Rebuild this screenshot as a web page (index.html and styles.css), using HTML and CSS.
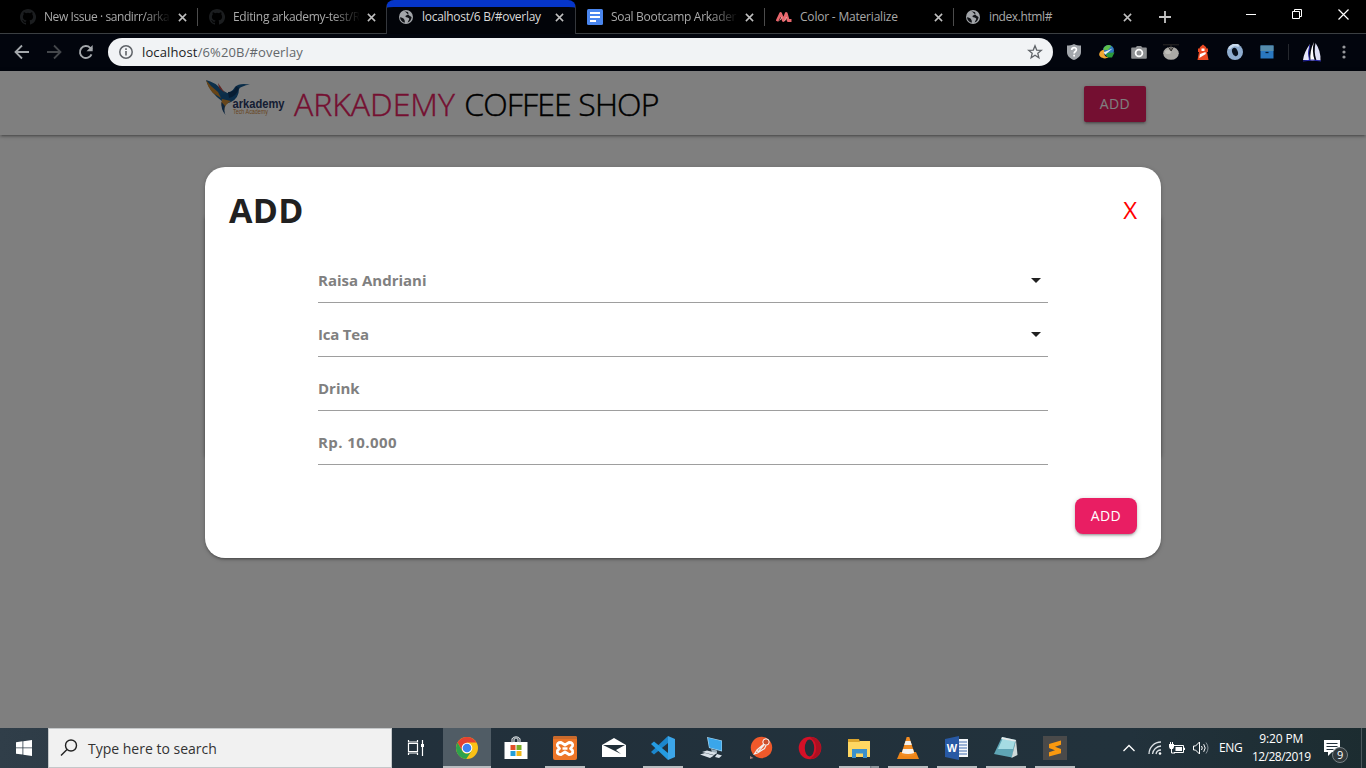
FILE: index.html
```html
<!DOCTYPE html>
<html lang="en">
<head>
<meta charset="utf-8">
<title>localhost/6 B/#overlay</title>
<link rel="stylesheet" href="styles.css">
</head>
<body>
<svg class="defs" width="0" height="0" aria-hidden="true">
  <symbol id="github" viewBox="0 0 16 16"><path d="M8 0C3.58 0 0 3.58 0 8c0 3.54 2.29 6.53 5.47 7.59.4.07.55-.17.55-.38v-1.49c-2.23.49-2.7-.94-2.7-.94-.36-.92-.89-1.17-.89-1.17-.73-.5.05-.49.05-.49.81.06 1.23.83 1.23.83.72 1.22 1.87.87 2.33.66.07-.52.28-.87.51-1.07-1.78-.2-3.64-.89-3.64-3.95 0-.87.31-1.59.82-2.15-.08-.2-.36-1.02.08-2.12 0 0 .67-.21 2.2.82a7.6 7.6 0 0 1 4 0c1.53-1.04 2.2-.82 2.2-.82.44 1.1.16 1.92.08 2.12.51.56.82 1.27.82 2.15 0 3.07-1.87 3.75-3.65 3.95.29.25.54.73.54 1.48v2.2c0 .21.15.46.55.38A8 8 0 0 0 8 0z" fill="#1b1d1f"/></symbol>
  <symbol id="globe" viewBox="0 0 16 16"><circle cx="8" cy="8" r="7" fill="#a2a5a9"/><path d="M6 1.600C8 3.500 10.500 2.200 10.400 4.400 10.300 6.200 8 5.500 7.500 7.200 7.200 8.500 9.300 8 10.600 9 12 10.200 10.800 11 10.200 12.200L9.600 13.500C12 12.800 13.400 10.500 13.600 8 12.500 8 12.500 7 11.200 6.600M2 8.200C4 8.200 5.500 9.200 6.200 10.400 6.700 11.300 7 12 6.700 13.700 4 13 2.200 10.900 2 8.200Z" fill="#101216"/></symbol>
  <symbol id="close" viewBox="0 0 10 10"><path d="M1 1l8 8M9 1L1 9" stroke="currentColor" stroke-width="1.700" fill="none"/></symbol>
</svg>

<div class="tabs">
  <div class="tab"><svg class="fav"><use href="#github"/></svg><span class="label t1">New Issue · sandirr/arka</span><svg class="x"><use href="#close"/></svg></div>
  <div class="tab sep"><svg class="fav"><use href="#github"/></svg><span class="label t2">Editing arkademy-test/R</span><svg class="x"><use href="#close"/></svg></div>
  <div class="tab active"><svg class="fav"><use href="#globe"/></svg><span class="label t3">localhost/6 B/#overlay</span><svg class="x"><use href="#close"/></svg></div>
  <div class="tab"><svg class="fav" viewBox="0 0 16 16"><rect width="16" height="16" rx="1.500" fill="#4a86ee"/><path d="M3 4h10M3 8h10M3 12h6" stroke="#fff" stroke-width="2"/></svg><span class="label t4">Soal Bootcamp Arkader</span><svg class="x"><use href="#close"/></svg></div>
  <div class="tab sep"><svg class="fav" viewBox="0 0 16 16"><path d="M1 12.200L4.600 4.500 7.400 11.500 10.200 4.500 12.200 11.500 15.500 11.500" fill="none" stroke="#e8666c" stroke-width="2.800" stroke-linejoin="round"/><path d="M3.700 11.500L6 8M8.600 12L10.500 8" stroke="#f2a5a8" stroke-width="1"/></svg><span class="label t5">Color - Materialize</span><svg class="x"><use href="#close"/></svg></div>
  <div class="tab sep"><svg class="fav"><use href="#globe"/></svg><span class="label t6">index.html#</span><svg class="x"><use href="#close"/></svg></div>
  <svg class="plus" viewBox="0 0 12 12"><path d="M6 0v12M0 6h12" stroke="#c4c4c4" stroke-width="1.800"/></svg>
  <div class="winbtns">
    <svg width="10" height="10"><path d="M0 5.500h10" stroke="#fff"/></svg>
    <svg width="10" height="10"><path d="M.5 2.500h7v7h-7zM2.500 2.500v-2h7v7h-2" fill="none" stroke="#fff"/></svg>
    <svg width="11" height="11"><path d="M.5.5l10 10M10.500.5l-10 10" stroke="#fff" stroke-width="1.200"/></svg>
  </div>
</div>

<div class="toolbar">
  <svg class="nav" viewBox="0 0 16 16"><path d="M15 8H2M8 1.500L1.500 8 8 14.500" fill="none" stroke="#a3a7ab" stroke-width="1.800"/></svg>
  <svg class="nav" viewBox="0 0 16 16"><path d="M1 8h13M8 1.500L14.500 8 8 14.500" fill="none" stroke="#44474b" stroke-width="1.800"/></svg>
  <svg class="nav" viewBox="0 0 16 16"><path d="M13.500 10.300A6 6 0 1 1 12.200 3.800L14 5.500" fill="none" stroke="#a3a7ab" stroke-width="1.900"/><path d="M14.700 1v6.200H8.500z" fill="#a3a7ab"/></svg>
  <div class="omnibox">
    <svg width="14" height="14" viewBox="0 0 14 14"><circle cx="7" cy="7" r="6.200" fill="none" stroke="#5f6368" stroke-width="1.500"/><path d="M7 6v4.500M7 3.300v1.600" stroke="#5f6368" stroke-width="1.600"/></svg>
    <span class="url"><b>localhost</b>/6%20B/#overlay</span>
    <svg class="star" width="16" height="16" viewBox="0 0 16 16"><path d="M8 1.800l1.700 4.300 4.600.3-3.500 2.900 1.100 4.500L8 11.300l-3.900 2.500 1.100-4.500L1.700 6.400l4.600-.3z" fill="none" stroke="#5f6368" stroke-width="1.300"/></svg>
  </div>
  <div class="exts">
    <svg viewBox="0 0 16 16"><path d="M8 0c2 1.400 4.500 1.500 7 1.500V8c0 4-3 6.500-7 8-4-1.500-7-4-7-8V1.500C3.500 1.500 6 1.400 8 0z" fill="#a3a7ac"/><path d="M5.700 6c0-3.200 4.800-3 4.700-.2 0 1.900-2.300 1.600-2.300 3.700M8.100 10.700v1.900" fill="none" stroke="#fff" stroke-width="1.700"/></svg>
    <svg viewBox="0 0 16 16"><circle cx="9.500" cy="6.500" r="5.500" fill="#2f78bd"/><path d="M4.500 4Q8-.5 12.500 2L9 6 5 6Z" fill="#5dc04a"/><path d="M7 9l8.500-.5-2.500 5H8z" fill="#2b9a39"/><path d="M4.500 5.500C-1 7.500-2 13.500 6 14.500l3.500-1C6.500 13 4.500 11 5.500 8z" fill="#f2a733"/><path d="M4.500 8.500l9-4-7 6z" fill="#e8f0f4"/></svg>
    <svg viewBox="0 0 16 16"><path d="M1 3.500h3.500L6 2h4l1.500 1.500H15a.8.8 0 0 1 .8.8V14a.8.8 0 0 1-.8.800H1A.8.8 0 0 1 .2 14V4.300a.8.800 0 0 1 .8-.8z" fill="#8f9193"/><circle cx="8" cy="9" r="3.400" fill="none" stroke="#fff" stroke-width="1.800"/></svg>
    <svg viewBox="0 0 16 16"><ellipse cx="8" cy="9.300" rx="7.800" ry="6.500" fill="#aaa9a5"/><path d="M0 .8h16" stroke="#2b2927"/><path d="M8 1v6M5.500 3l2.500 4 2.500-4" fill="none" stroke="#2f2d2b"/><ellipse cx="5" cy="8" rx="3" ry="2" fill="#c0bfba"/></svg>
    <svg viewBox="0 0 16 16"><path d="M4.500 4.500L5 3l3-2.500L11 3l.5 1.500H13V8h-1l1.500 8h-11L4 8H3V4.500z" fill="#ed4a23"/><path d="M6.500 4.500h3V7h-3zM5 10l5.500-2 .3 2-6.500 4z" fill="#fff"/></svg>
    <svg viewBox="0 0 16 16"><circle cx="8" cy="8" r="8" fill="#8fadcf"/><path d="M2 5a7 7 0 0 1 10-3" stroke="#c8daec" stroke-width="2.500" fill="none"/><ellipse cx="8" cy="8" rx="2.800" ry="4.300" transform="rotate(-20 8 8)" fill="#07101d"/></svg>
    <svg viewBox="0 0 16 16"><rect x="1.500" y="1.500" width="13" height="13" fill="#2a78c0"/><path d="M1.500 1.500h13V7h-13z" fill="#568cab"/><path d="M6.500 8.500h3" stroke="#061b35" stroke-width="1.300"/></svg>
  </div>
  <i class="bar"></i>
  <svg class="profile" viewBox="0 0 20 20"><path d="M8 2Q2 10 1 18h6.500Q5.500 10 8 2z" fill="#e8e9fa"/><path d="M12 0Q7.500 9 8.500 18.500h4.200Q9.500 9 12 0z" fill="#fff"/><path d="M13.500 1q-2 9 1 17.500h4Q19 9 13.500 1z" fill="#dfe1f6"/><path d="M1 19q10-2 18 0M7.800 3q-2.500 8-.3 15.500" fill="none" stroke="#2929ad"/></svg>
  <svg class="kebab" width="4" height="14"><g fill="#96989b"><circle cx="2" cy="2" r="1.600"/><circle cx="2" cy="7" r="1.600"/><circle cx="2" cy="12" r="1.600"/></g></svg>
</div>

<main class="page">
  <header class="navbar">
    <svg class="logo" viewBox="0 0 80 38">
      <path d="M0 0Q9 2 16 10L23 14 24 20 17 22Q4 13 0 0Z" fill="#1a6096"/><path d="M0 0Q2 8 7 13L15 18 12 12 5 6Z" fill="#d08a2e"/><path d="M12 3l7 10-6-5z" fill="#c04a44"/>
      <path d="M15 15Q26 13 29 7 33 2.500 44 4.500 35 6 33 9 33 18 25 22L17 25z" fill="#175a92"/><path d="M22 12Q29 12 30 6L33 8Q31 16 23 18z" fill="#0f3b66"/><path d="M16 19L25 21Q18 25 18.500 30 14 27 16 19z" fill="#cf8d36"/><path d="M15.500 22q-1 7 4 13-2-5-.5-9z" fill="#1d4c7c"/>
      <text x="26.500" y="27.500" class="logo-name" textLength="52" lengthAdjust="spacingAndGlyphs">arkademy</text><text x="27" y="34" class="logo-sub" textLength="35" lengthAdjust="spacingAndGlyphs">Tech Academy</text>
    </svg>
    <h1 class="brand"><span class="brand-a">ARKADEMY</span> <span class="brand-b">COFFEE SHOP</span></h1>
    <a class="btn nav-btn">ADD</a>
  </header>
  <div class="card"></div>
  <div class="overlay">
    <section class="modal">
      <div class="modal-head"><h2>ADD</h2><a class="dismiss">X</a></div>
      <form class="fields">
        <div class="field f1"><span>Raisa Andriani</span><i class="caret"></i></div>
        <div class="field f2"><span>Ica Tea</span><i class="caret"></i></div>
        <div class="field f3"><span>Drink</span></div>
        <div class="field f4"><span>Rp. 10.000</span></div>
      </form>
      <div class="modal-foot"><a class="btn round">ADD</a></div>
    </section>
  </div>
</main>

<footer class="taskbar">
  <div class="start"><svg width="16" height="16" viewBox="0 0 16 16"><path d="M0 2.200L6.500 1.300V7.500H0zM7.300 1.200L16 0v7.500H7.300zM0 8.300h6.500v6.300L0 13.700zM7.300 8.300H16V16l-8.700-1.300z" fill="#fff"/></svg></div>
  <div class="search"><svg width="18" height="18" viewBox="0 0 18 18"><circle cx="11" cy="6.500" r="5.500" fill="none" stroke="#222" stroke-width="1.400"/><path d="M7 10.500L1 16.500" stroke="#222" stroke-width="1.500"/></svg><span>Type here to search</span></div>
  <div class="apps">
    <div class="app"><svg viewBox="0 0 24 24"><g fill="none" stroke="#fff" stroke-width="1.200"><path d="M4.500 7.500h9v8h-9zM4.500 4v2h9V4M4.500 19v-2h9v2M18.500 4v16"/></g><path d="M17 8h3v3h-3z" fill="#fff"/></svg></div>
    <div class="app current open"><svg viewBox="0 0 24 24"><circle cx="12" cy="12" r="11" fill="#fbc116"/><path d="M2.500 6.500A11 11 0 0 1 21.500 6.500H12L7.200 14.700z" fill="#e34132"/><path d="M2.500 6.500A11 11 0 0 0 11.200 23l5.600-8.200A5.500 5.500 0 0 1 7 14.500z" fill="#2da24c"/><circle cx="12" cy="12" r="5.300" fill="#fff"/><circle cx="12" cy="12" r="4.300" fill="#3d82f1"/></svg></div>
    <div class="app"><svg viewBox="0 0 24 24"><path d="M.5 6h23v17H.5z" fill="#fff"/><path d="M8 7V3q4-4.500 8 0v4M10 6V3.500q2-3 4 0V6" fill="none" stroke="#dce1e4" stroke-width="1.100"/><path d="M6.500 9h5v5h-5z" fill="#e24f28"/><path d="M12.500 9h5v5h-5z" fill="#78ac27"/><path d="M6.500 15h5v5h-5z" fill="#229ed8"/><path d="M12.500 15h5v5h-5z" fill="#efb719"/></svg></div>
    <div class="app open"><svg viewBox="0 0 24 24"><rect width="24" height="24" rx="2" fill="#ed7527"/><path d="M0 2a2 2 0 0 1 2-2h20a2 2 0 0 1 2 2v1H0z" fill="#c96a2c"/><path d="M8 6.500Q3.500 6.500 4.500 10L6.500 12.500l-2 2Q3.500 18.500 8 18.500L12 16l4 2.500Q20.500 18.500 19.500 14.500l-2-2 2-2.500Q20.500 6.500 16 6.500L12 9z" fill="none" stroke="#fff" stroke-width="2.800" stroke-linejoin="round"/><path d="M9.500 12.500h5" stroke="#fff" stroke-width="2.500"/></svg></div>
    <div class="app"><svg viewBox="0 0 24 24"><path d="M0 9L12 2l12 7v12H0z" fill="#fff"/><path d="M1 9h22l-9 5 5 4-8-4z" fill="#22303a"/></svg></div>
    <div class="app open"><svg viewBox="0 0 24 24"><path d="M17 0v7L3 18.500 0 16 17 0z" fill="#1c86cc"/><path d="M0 8l3-2.500L17 17v7z" fill="#259be1"/><path d="M17 0l7 3v18l-7 3z" fill="#3ca5e8"/></svg></div>
    <div class="app"><svg viewBox="0 0 24 24"><path d="M7 1l15 3.500v11L9 12z" fill="#a9d5ee"/><path d="M8 1.800l13.500 3.300v9.500L9.500 11.500z" fill="#3aa6ea"/><path d="M11 13l6 1.500v3l-5-1z" fill="#9fb0bc"/><path d="M2 16l5-1.500 10 2.500-3 2zM0 18.500l5-1.500 9 2.500-4 2.500zM17 18l5 1.500-3 2.500-4-1z" fill="#dae2e9"/></svg></div>
    <div class="app"><svg viewBox="0 0 24 24"><circle cx="12.500" cy="11.500" r="10.700" fill="#ef592b"/><circle cx="17" cy="6" r="3.200" fill="#c8502f" stroke="#fff"/><path d="M15 8L8 14l-2.500 4 3-1 7-4.500 1.500-3M8 14l1 2 6-7" fill="none" stroke="#eee" stroke-width="1.200"/><path d="M1 20l3.500 2L1 23z" fill="#b0837a"/></svg></div>
    <div class="app"><svg viewBox="0 0 24 24"><ellipse cx="12" cy="12" rx="11.300" ry="11.300" fill="#d51027"/><path d="M12 1a11 11 0 0 1 0 22Q21 17 17 6z" fill="#ad1021"/><ellipse cx="11.500" cy="12" rx="4.700" ry="8.500" fill="#22303a"/></svg></div>
    <div class="app open files"><svg viewBox="0 0 24 24"><path d="M1 3h8l2 2h12v16H1z" fill="#ffd762"/><path d="M1 3h11l1 3H1z" fill="#dca52d"/><path d="M5 13h15v9h-4v-4.500H9V22H5z" fill="#3c91cc"/></svg></div>
    <div class="app open"><svg viewBox="0 0 24 24"><path d="M4 16h16l3 7H1z" fill="#ed8518"/><path d="M10.700 1h2.600L19 19q-7 3-14 0z" fill="#f28c23"/><path d="M9.500 5h5l1.300 4H8.200zM7 13h10l1.200 4q-6 2-12.400 0z" fill="#f4f2ef"/></svg></div>
    <div class="app open"><svg viewBox="0 0 24 24"><path d="M12 3h11v18H12z" fill="#f5f8fb"/><path d="M14 6h8M14 9h8M14 12h8M14 15h8M14 18h8" stroke="#436daf" stroke-width="1.200"/><path d="M0 3l14-3v24L0 21z" fill="#2859a4"/><text x="1.800" y="16" class="word">W</text></svg></div>
    <div class="app open"><svg viewBox="0 0 24 24"><path d="M8 1l14 3-4 17.500L0 18z" fill="#5fa5b5"/><path d="M8.500 3L21 5.500 19 13 4 13z" fill="#a5dce3"/><path d="M22 4l1.500 15-6 3z" fill="#cfdada"/><path d="M8 1l14 3-.5 1.800L7.300 3z" fill="#e6eaea"/></svg></div>
    <div class="app open"><svg viewBox="0 0 24 24"><rect width="24" height="24" fill="#4a4a4a"/><path d="M18 4.500v4.300L12 10.800l6 2.200v4.200L6 20.500v-4.300l6-2L6 12V8z" fill="#f8980f"/></svg></div>
  </div>
  <div class="tray">
    <svg class="chev" width="12" height="8"><path d="M.5 7L6 1.500 11.500 7" fill="none" stroke="#fff" stroke-width="1.300"/></svg>
    <svg class="wifi" width="14" height="14"><path d="M1 13A12 12 0 0 1 13 1M4.500 13A9 9 0 0 1 13 5M8 13a5 5 0 0 1 5-4" fill="none" stroke="#dce1e5" stroke-width="1.300"/><circle cx="12" cy="12.500" r="1.300" fill="#fff"/></svg>
    <svg class="batt" width="16" height="12"><path d="M5 3.500h9.500v7H5M14.500 6h1v2" fill="none" stroke="#fff"/><path d="M6.500 5H13v4H6.500zM0 2h5v3l-1 2H1L0 5z" fill="#fff"/><path d="M1.500 0v3M3.500 0v3M2.500 6v5H6" fill="none" stroke="#fff"/></svg>
    <svg class="vol" width="16" height="14"><path d="M.5 5h2l4-4v12l-4-4h-2z" fill="none" stroke="#fff"/><path d="M8.500 5q1.500 2 0 4M10.700 3.200q3 3.800 0 7.600" fill="none" stroke="#fff"/><path d="M13 1.500q4 5.500 0 11" fill="none" stroke="#87929a"/></svg>
    <span class="lang">ENG</span>
    <div class="clock"><span>9:20 PM</span><span class="date">12/28/2019</span></div>
    <div class="notif"><svg width="17" height="17"><path d="M0 0h16v12H8l-4 4v-4H0z" fill="#fff"/><path d="M2.500 3.500h11M2.500 6.500h11M2.500 9.500h7" stroke="#22303a"/></svg><span class="badge">9</span></div>
  </div>
</footer>
</body>
</html>
```
FILE: styles.css
```css
* { box-sizing: border-box; }
body { margin: 0; width: 1366px; height: 768px; overflow: hidden; display: flex; flex-direction: column; background: #000; font-family: "Open Sans", "Noto Sans", sans-serif; }
svg { display: block; flex: none; }
.defs { position: absolute; }

.tabs { height: 34px; display: flex; padding-left: 8px; border-bottom: 1px solid #3b3f42; background: #000; flex: none; }
.tab { width: 189px; height: 34px; display: flex; align-items: center; padding: 0 10px 0 12px; color: #a9a9a9; }
.tab.sep { background: linear-gradient(#4c4c4c, #4c4c4c) 0 8px / 1px 18px no-repeat; }
.tab.active { width: 190px; margin-right: -1px; background: #020409; border: 1px solid #34373c; border-top: 7px solid #0535c9; border-bottom: 0; border-radius: 8px 8px 0 0; color: #dadada; padding: 0 11px 7px 11px; }
.fav { width: 16px; height: 16px; margin-right: 8px; }
.label { flex: 1; font-size: 12px; line-height: 18px; white-space: nowrap; min-width: 0; letter-spacing: -.29px; }
.t1, .t2, .t4 { -webkit-mask-image: linear-gradient(90deg, #000 100px, transparent 127px); mask-image: linear-gradient(90deg, #000 100px, transparent 127px); }
.t1 { letter-spacing: -.42px; }
.t2 { letter-spacing: -.3px; }
.t4 { letter-spacing: -.3px; }
.t5 { letter-spacing: -.2px; }
.t6 { letter-spacing: -.4px; }
.x { width: 9px; height: 9px; margin-left: 8px; color: #c0c0c0; }
.plus { width: 12px; height: 12px; margin: 11px 0 0 17px; }
.winbtns { display: flex; gap: 36px; margin: 9px 17px 0 auto; }

.toolbar { height: 37px; flex: none; display: flex; align-items: center; background: #02050d; padding: 0 0 1px 14px; }
.nav { width: 16px; height: 16px; margin-right: 16px; }
.omnibox { width: 945px; height: 28px; margin-left: -2px; border-radius: 14px; background: #f1f3f5; display: flex; align-items: center; padding: 0 10px 0 11px; }
.url { margin-left: 9px; font-size: 13px; line-height: 18px; color: #63676b; letter-spacing: .13px; }
.url b { font-weight: 400; color: #202124; }
.star { margin-left: auto; }
.exts { display: flex; gap: 16px; margin-left: 13px; }
.exts svg { width: 16px; height: 16px; }
.exts svg:nth-child(n+2) { transform: translateX(1px); }
.bar { width: 1px; height: 16px; background: #25282e; margin-left: 14px; }
.profile { width: 20px; height: 20px; margin-left: 13px; }
.kebab { margin-left: 20px; }

.page { height: 657px; flex: none; position: relative; background: #fff; }
.navbar { height: 64px; display: flex; align-items: center; padding: 0 220px 0 206px; background: #fff; box-shadow: 0 2px 2px 0 rgba(0,0,0,.14), 0 3px 1px -2px rgba(0,0,0,.12), 0 1px 5px 0 rgba(0,0,0,.2); }
.logo { width: 80px; height: 38px; margin-top: -8px; }
.logo-name { font: bold 12px "Liberation Sans", sans-serif; fill: #2a3a66; }
.logo-sub { font: 6.500px "Liberation Sans", sans-serif; fill: #d18a40; }
.brand { margin: 1px 0 0 8px; font-size: 32px; line-height: 44px; font-weight: 300; color: #000; white-space: nowrap; -webkit-text-stroke: .45px currentColor; }
.brand-a { color: #e91e63; }
.brand-b { margin-left: 1px; letter-spacing: -.85px; }
.btn { width: 62px; height: 36px; display: flex; align-items: center; justify-content: center; padding-bottom: 2px; border-radius: 2px; background: #e91e63; color: #fff; font-size: 14px; letter-spacing: .4px; box-shadow: 0 2px 2px 0 rgba(0,0,0,.14), 0 3px 1px -2px rgba(0,0,0,.12), 0 1px 5px 0 rgba(0,0,0,.2); }
.nav-btn { margin: 2px 0 0 auto; }
.card { width: 956px; height: 240px; margin: 81px auto 0; box-shadow: 0 2px 2px 0 rgba(0,0,0,.14), 0 3px 1px -2px rgba(0,0,0,.12), 0 1px 5px 0 rgba(0,0,0,.2); }
.overlay { position: absolute; inset: 0; background: rgba(0,0,0,.5); padding-top: 96px; }
.modal { width: 956px; height: 391px; margin: 0 auto; padding: 24px; border-radius: 20px; background: #fff; box-shadow: 0 2px 2px 0 rgba(0,0,0,.14), 0 3px 1px -2px rgba(0,0,0,.12), 0 1px 5px 0 rgba(0,0,0,.2); }
.modal-head { height: 40px; display: flex; align-items: center; justify-content: space-between; color: #212121; }
.modal-head h2 { margin: 0; padding-bottom: 2px; font-size: 34px; line-height: 38px; letter-spacing: .3px; }
.dismiss { color: #f00; font-size: 24px; padding-bottom: 4px; }
.fields { margin: 26px 89px 0; }
.field { height: 46px; margin-bottom: 8px; border-bottom: 1px solid #9e9e9e; display: flex; align-items: center; justify-content: space-between; padding-right: 7px; font-size: 15px; font-weight: 700; color: #808080; }
.f2 { letter-spacing: -.2px; }
.f4 { letter-spacing: .42px; }
.caret { margin-top: 2px; border: 5px solid transparent; border-top-color: #212121; border-bottom: 0; }
.modal-foot { margin-top: 33px; display: flex; justify-content: flex-end; }
.round { border-radius: 8px; }

.taskbar { height: 40px; flex: none; display: flex; background: linear-gradient(90deg, #303e49 0, #22303b 400px, #22323c 1130px, #1c2c30 1366px); color: #fff; }
.start { width: 48px; display: flex; align-items: center; justify-content: center; }
.search { width: 344px; display: flex; align-items: center; padding-left: 11px; background: #f1f1f1; border: 1px solid #c4c7c9; color: #333; font-size: 14px; }
.search span { margin-left: 10px; }
.apps { display: flex; gap: 1px; }
.app { width: 48px; height: 40px; display: flex; align-items: center; justify-content: center; }
.app svg { width: 24px; height: 24px; }
.current { background: #505c65; margin-left: 2px; }
.open { background-image: linear-gradient(#b8bdc0, #b8bdc0); background-repeat: no-repeat; background-size: 40px 2px; background-position: 50% 100%; }
.current.open { background-size: 48px 2px; }
.files { background-image: linear-gradient(90deg, #b8bdc0 31px, #66717a 31px, #8d969c 33px); }
.word { font: bold 11px "Liberation Sans", sans-serif; fill: #fff; }
.tray { flex: 1; display: flex; align-items: center; font-size: 12px; border-right: 1px solid #4b585c; margin-right: 4px; }
.chev { margin-left: 44px; }
.wifi { margin-left: 13px; }
.batt { margin-left: 7px; }
.vol { margin-left: 8px; }
.lang { margin-left: 10px; letter-spacing: -.4px; padding-bottom: 1px; }
.clock { width: 60px; margin-left: 9px; display: flex; flex-direction: column; align-items: center; line-height: 18px; white-space: nowrap; letter-spacing: -.1px; }
.date { letter-spacing: -.5px; }
.notif { position: relative; margin-left: 13px; }
.badge { position: absolute; left: 8px; top: 7px; width: 16px; height: 16px; border: 1px solid #788286; border-radius: 50%; background: #31393c; font-size: 11px; line-height: 14px; text-align: center; }
```
